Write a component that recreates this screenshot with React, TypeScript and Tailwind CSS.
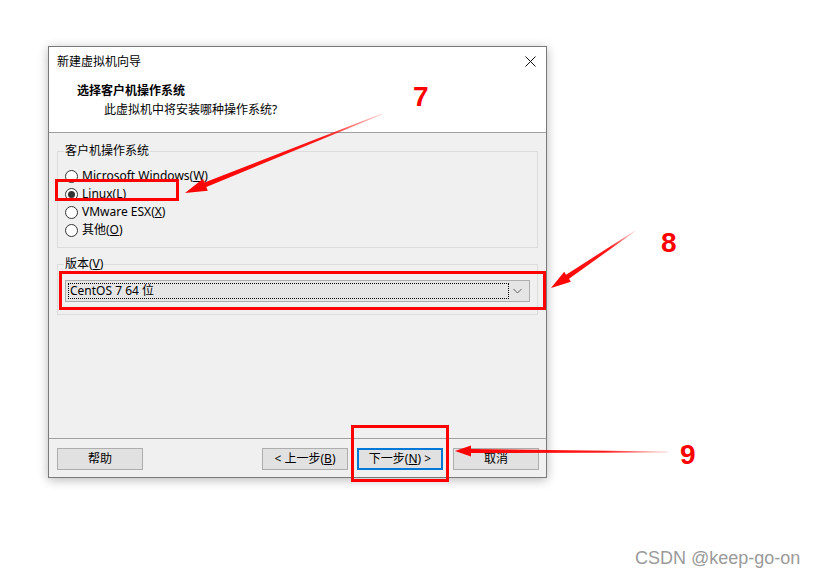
import type { ReactNode } from 'react'

const ui = "font-['Noto_Sans','Noto_Sans_CJK_SC',sans-serif] text-[12px] text-black"

function arrowPoints(x1: number, y1: number, x2: number, y2: number, len: number, head: number, shaft: number) {
  const d = Math.hypot(x2 - x1, y2 - y1)
  const ux = (x2 - x1) / d
  const uy = (y2 - y1) / d
  const nx = -uy
  const ny = ux
  const bx = x2 - ux * len
  const by = y2 - uy * len
  const p = (x: number, y: number) => `${x.toFixed(1)},${y.toFixed(1)}`
  return [
    p(x1 + nx * 0.4, y1 + ny * 0.4),
    p(bx + (nx * shaft) / 2, by + (ny * shaft) / 2),
    p(bx + (nx * head) / 2, by + (ny * head) / 2),
    p(x2, y2),
    p(bx - (nx * head) / 2, by - (ny * head) / 2),
    p(bx - (nx * shaft) / 2, by - (ny * shaft) / 2),
    p(x1 - nx * 0.4, y1 - ny * 0.4),
  ].join(' ')
}

type ArrowProps = { id: string; x1: number; y1: number; x2: number; y2: number; len: number; head: number; shaft: number }

function Arrow({ id, x1, y1, x2, y2, len, head, shaft }: ArrowProps) {
  return (
    <>
      <defs>
        <linearGradient id={id} gradientUnits="userSpaceOnUse" x1={x1} y1={y1} x2={x2} y2={y2}>
          <stop offset="0" stopColor="#ff0000" stopOpacity="0.15" />
          <stop offset="0.3" stopColor="#ff0000" stopOpacity="0.9" />
          <stop offset="1" stopColor="#ff0000" />
        </linearGradient>
      </defs>
      <polygon points={arrowPoints(x1, y1, x2, y2, len, head, shaft)} fill={`url(#${id})`} />
    </>
  )
}

function Radio({ checked = false, children }: { checked?: boolean; children: ReactNode }) {
  return (
    <div className="flex h-[18px] items-center gap-[4px]">
      <span className="flex h-[13px] w-[13px] items-center justify-center rounded-full border border-[#333] bg-white">
        {checked && <span className="h-[7px] w-[7px] rounded-full bg-[#333]" />}
      </span>
      <span className="leading-[18px]">{children}</span>
    </div>
  )
}

function Button({ children, focused = false, className = '' }: { children: ReactNode; focused?: boolean; className?: string }) {
  return (
    <div
      className={`flex h-[22px] w-[86px] items-center justify-center bg-[#e1e1e1] leading-[16px] ${
        focused ? 'border-2 border-[#0078d7]' : 'border border-[#adadad]'
      } ${className}`}
    >
      {children}
    </div>
  )
}

export default function App() {
  return (
    <div className={`relative h-[578px] w-[818px] overflow-hidden bg-white pl-[48px] pt-[46px] ${ui}`}>
      <div className="flex h-[432px] w-[499px] flex-col border border-[#7a7a7a] bg-[#f0f0f0] shadow-[0_2px_10px_rgba(0,0,0,0.28)]">
        <div className="flex h-[29px] items-center justify-between bg-white pl-[8px] pr-[10px]">
          <span className="leading-[16px]">新建虚拟机向导</span>
          <svg width="11" height="11" viewBox="0 0 11 11">
            <path d="M0.5 0.5 L10.5 10.5 M10.5 0.5 L0.5 10.5" stroke="#111" strokeWidth="1" />
          </svg>
        </div>
        <div className="h-[57px] border-b border-[#a0a0a0] bg-white pl-[28px] pt-[7px]">
          <p className="font-bold leading-[16px]">选择客户机操作系统</p>
          <p className="ml-[27px] mt-[3px] leading-[16px]">此虚拟机中将安装哪种操作系统?</p>
        </div>

        <div className="flex-1 px-[8px]">
          <fieldset className="mt-[10px] border border-[#dcdcdc] pb-[8px]">
            <legend className="ml-[6px] px-[1px] leading-[16px]">客户机操作系统</legend>
            <div className="pl-[7px] pt-[8px]">
              <Radio>
                Microsoft Windows(<u>W</u>)
              </Radio>
              <Radio checked>Linux(L)</Radio>
              <Radio>
                VMware ESX(<u>X</u>)
              </Radio>
              <Radio>
                其他(<u>O</u>)
              </Radio>
            </div>
          </fieldset>

          <fieldset className="mt-[8px] border border-[#dcdcdc] pb-[12px]">
            <legend className="ml-[6px] px-[1px] leading-[16px]">
              版本(<u>V</u>)
            </legend>
            <div className="mx-[7px] mt-[8px] flex h-[22px] items-center border border-[#adadad] bg-[#e5e5e5] pl-[2px] pr-[4px]">
              <div className="flex h-[16px] flex-1 items-center border border-dotted border-black pl-[1px] leading-[16px]">
                CentOS 7 64 位
              </div>
              <svg width="15" height="16" viewBox="0 0 15 16" className="ml-[1px]">
                <path d="M3.5 6 L7.5 10 L11.5 6" fill="none" stroke="#606060" strokeWidth="1" />
              </svg>
            </div>
          </fieldset>
        </div>

        <div className="flex h-[39px] border-t border-[#a0a0a0] pl-[8px] pt-[9px]">
          <Button>帮助</Button>
          <Button className="ml-[119px]">
            &lt; 上一步(<u>B</u>)
          </Button>
          <Button focused className="ml-[9px]">
            下一步(<u>N</u>) &gt;
          </Button>
          <Button className="ml-[10px]">取消</Button>
        </div>
      </div>

      {/* annotations */}
      <div className="absolute left-[55px] top-[179px] h-[22px] w-[124px] border-[3px] border-[#ff0000]" />
      <div className="absolute left-[59px] top-[271px] h-[39px] w-[487px] border-[3px] border-[#ff0000]" />
      <div className="absolute left-[351px] top-[425px] h-[57px] w-[98px] border-[3px] border-[#ff0000]" />

      <svg className="absolute left-0 top-0" width="818" height="578" viewBox="0 0 818 578">
        <Arrow id="a7" x1={382} y1={114} x2={185} y2={193} len={22} head={13} shaft={5} />
        <Arrow id="a8" x1={635} y1={231} x2={551} y2={288} len={20} head={12} shaft={5} />
        <Arrow id="a9" x1={668} y1={452} x2={455} y2={451} len={16} head={11} shaft={4} />
      </svg>

      <span className="absolute left-[413px] top-[82px] font-['Liberation_Sans',sans-serif] text-[28px] font-bold leading-[30px] text-[#ff0000]">
        7
      </span>
      <span className="absolute left-[661px] top-[228px] font-['Liberation_Sans',sans-serif] text-[28px] font-bold leading-[30px] text-[#ff0000]">
        8
      </span>
      <span className="absolute left-[680px] top-[440px] font-['Liberation_Sans',sans-serif] text-[28px] font-bold leading-[30px] text-[#ff0000]">
        9
      </span>
      <span className="absolute left-[635px] top-[547px] font-['Liberation_Sans',sans-serif] text-[18px] leading-[22px] text-[#9a9a9a]">
        CSDN @keep-go-on
      </span>
    </div>
  )
}
